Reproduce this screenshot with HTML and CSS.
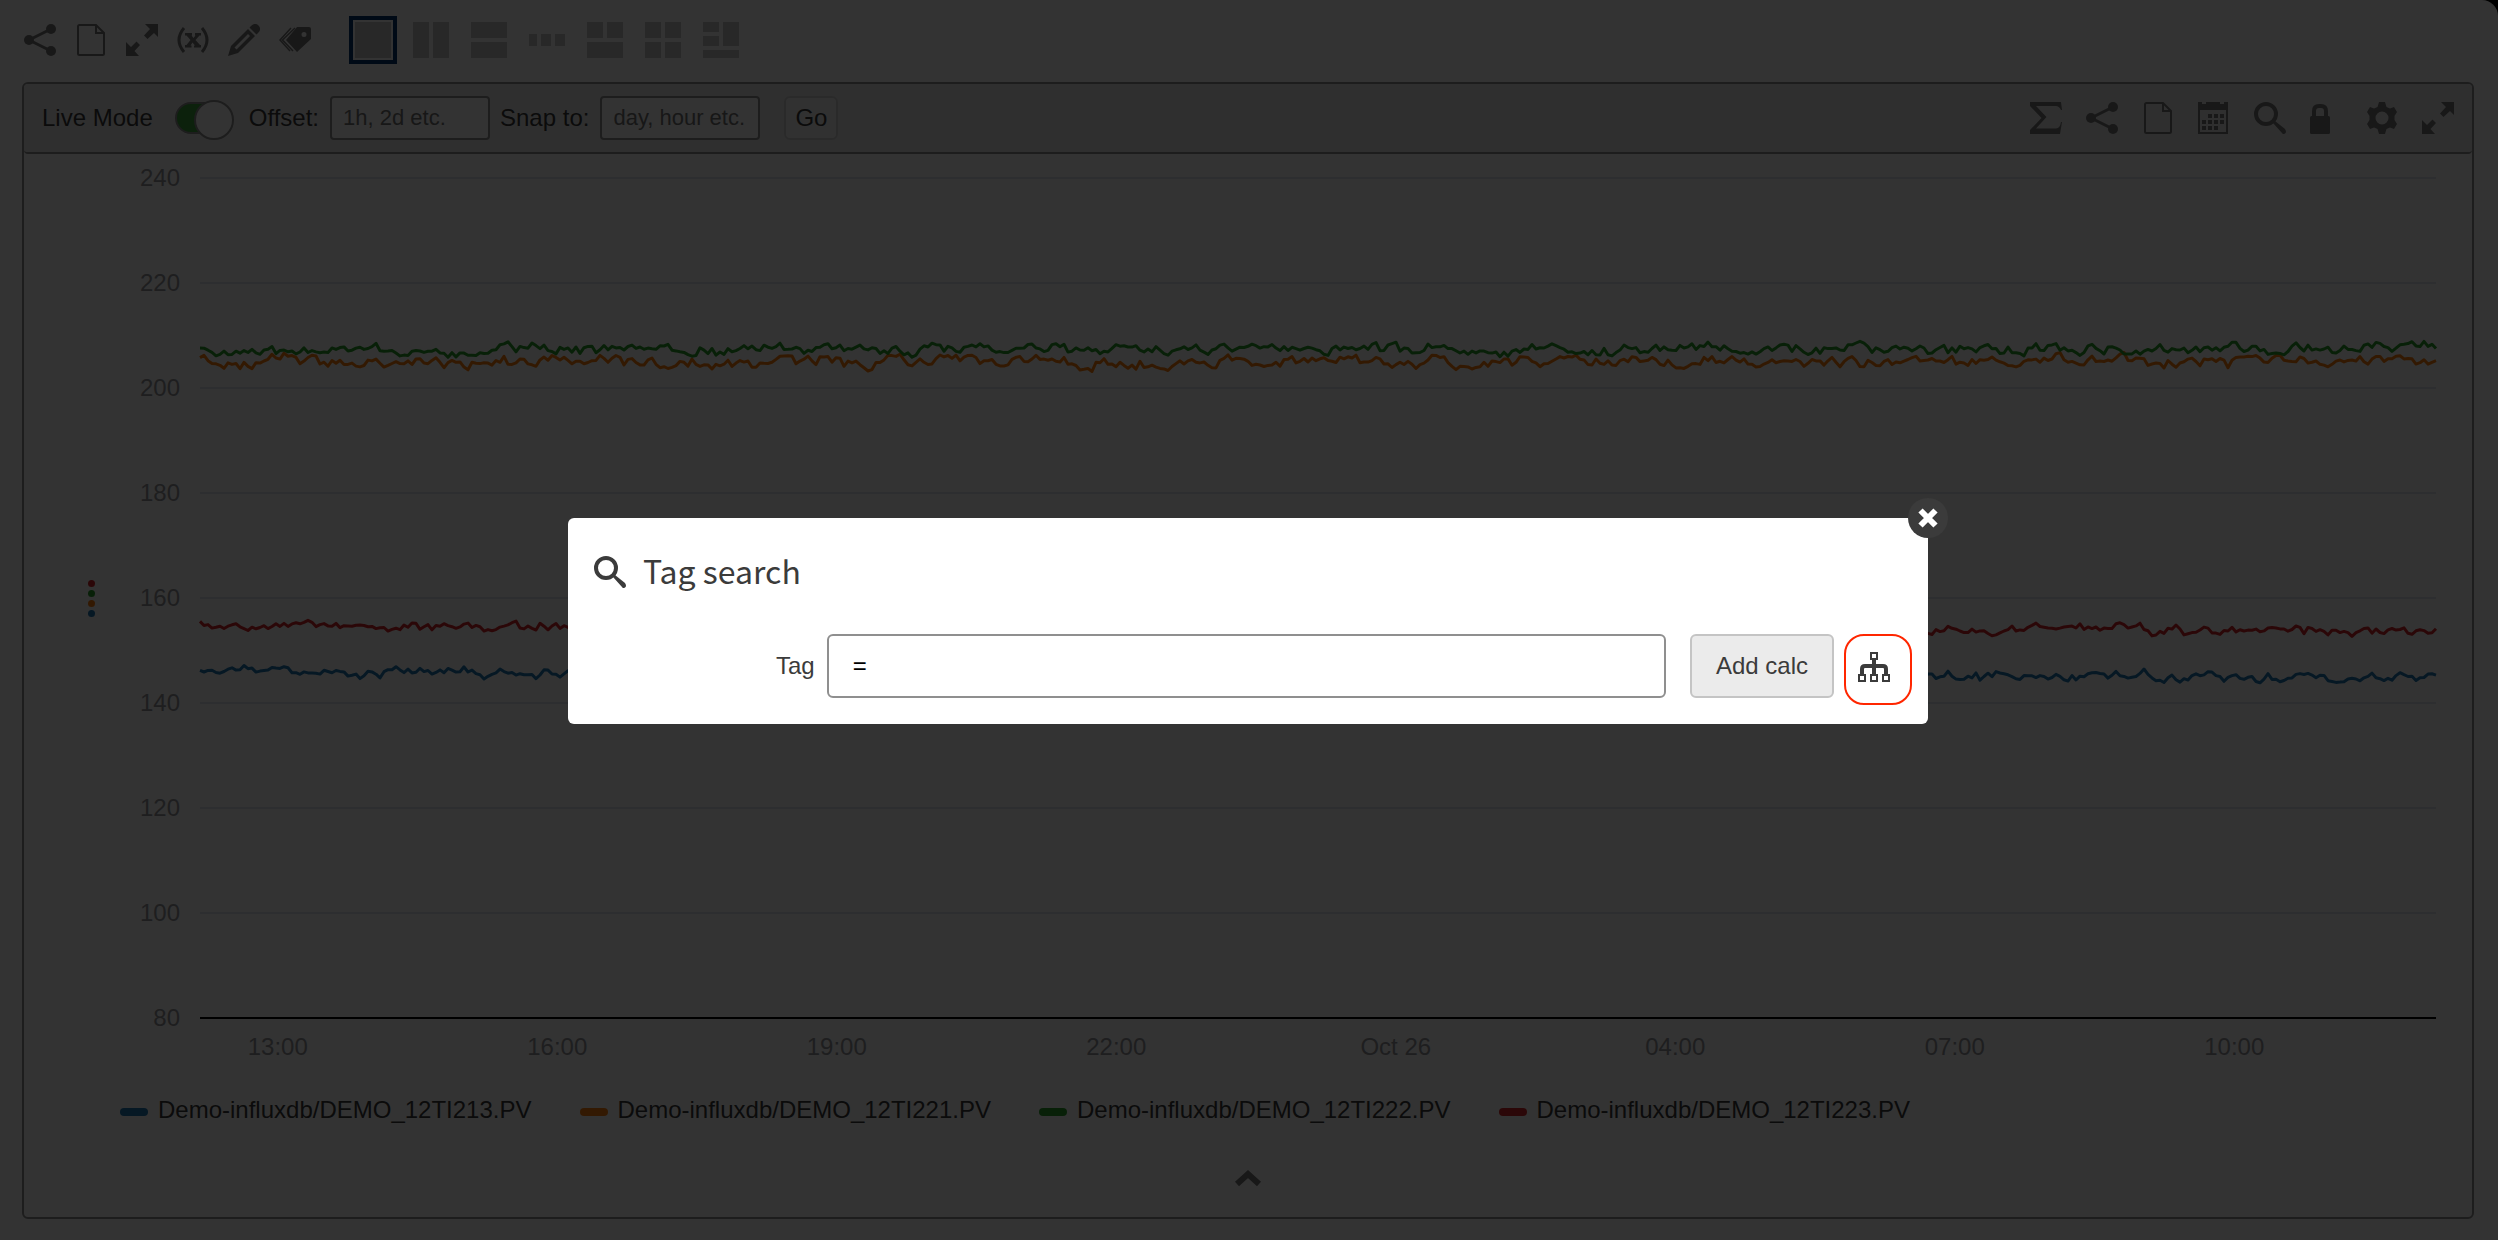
FILE: index.html
```html
<!DOCTYPE html>
<html lang="en">
<head>
<meta charset="utf-8">
<title>Trend view</title>
<link rel="stylesheet" href="styles.css">
</head>
<body>
<svg class="sprite" aria-hidden="true">
  <symbol id="i-share" viewBox="0 0 32 32"><path d="M5 16 27 5M5 16 27 27" fill="none" stroke="currentColor" stroke-width="3"/><circle cx="5" cy="16" r="5"/><circle cx="27" cy="5" r="5"/><circle cx="27" cy="27" r="5"/></symbol>
  <symbol id="i-file" viewBox="0 0 32 32"><path d="M5 1H21L29 9V29.500Q29 31 27.500 31H4.500Q3 31 3 29.500V2.500Q3 1 4.500 1ZM21 1V9H29" fill="none" stroke="currentColor" stroke-width="2"/></symbol>
  <symbol id="i-expand" viewBox="0 0 32 32"><path d="M19 0H32V13L28 9 21.500 15 18 11.500 24 5ZM13 32H0V18L5 23 10.500 17.500 14 21 8.500 27Z"/></symbol>
  <symbol id="i-calc" viewBox="0 0 32 32"><path d="M7 4Q-3 16 7 28M25 4Q35 16 25 28" fill="none" stroke="currentColor" stroke-width="3"/><path d="M8 9H15V11.500H14.500L16.500 14 18.500 11.500H18V9H24V11.500H22.500L18.500 16 23 21H24V23.500H17V21.500H18L15.500 18.500 13.500 21.500H14.500V23.500H8V21H9.500L13.500 16 9.500 11.500H8Z"/></symbol>
  <symbol id="i-pencil" viewBox="0 0 32 32"><path d="M23 2Q27-2 30.500 1.500T30 9L28.500 10.500 21.500 3.500ZM20 5 27 12 10 29 0 32 3 22ZM20 10 6.500 23.500 8.500 25.500 22 12Z" fill-rule="evenodd"/></symbol>
  <symbol id="i-tags" viewBox="0 0 32 32"><path d="M18 3H30Q32 3 32 5V15L18 28 7 16ZM25 8A2.500 2.500 0 1 0 25 13 2.500 2.500 0 1 0 25 8Z" fill-rule="evenodd"/><path d="M16 4 3.500 16 14 27M12 4 1 16 11 27" fill="none" stroke="currentColor" stroke-width="1.500"/></symbol>
  <symbol id="i-sigma" viewBox="0 0 32 32"><path d="M0 0H31L32 8H31Q29 4 26 4H6L16.500 15 6 26.500H26Q30 26.500 31 20H32L30 32H0V28L11.500 16 0 4Z"/></symbol>
  <symbol id="i-calendar" viewBox="0 0 32 32"><path d="M0 0H4V2H8V0H22V2H26V0H30V32H0ZM2 8V30H28V8Z" fill-rule="evenodd"/><path d="M10 12h4v4h-4zM16 12h4v4h-4zM22 12h4v4h-4zM4 18h4v4h-4zM10 18h4v4h-4zM16 18h4v4h-4zM22 18h4v4h-4zM4 24h4v4h-4zM10 24h4v4h-4zM16 24h4v4h-4z"/></symbol>
  <symbol id="i-search" viewBox="0 0 32 32"><circle cx="12" cy="12" r="10" fill="none" stroke="currentColor" stroke-width="4"/><path d="M19 21 21 19 31 27Q33 30 31 31.500T28 31Z"/></symbol>
  <symbol id="i-lock" viewBox="0 0 32 32"><path d="M4 16V9Q4 4 9 4H11Q16 4 16 9V16" fill="none" stroke="currentColor" stroke-width="4"/><rect y="14" width="20" height="18" rx="1.500"/></symbol>
  <symbol id="i-gear" viewBox="0 0 32 32"><path d="M13 0H19L20.500 5 24 6.500 28 5 31 10 28.500 14V18L31 22 28 27 24 25.500 20.500 27 19 32H13L11.500 27 8 25.500 4 27 1 22 3.500 18V14L1 10 4 5 8 6.500 11.500 5ZM16 9.500A6.500 6.500 0 1 0 16 22.500 6.500 6.500 0 1 0 16 9.500Z" fill-rule="evenodd"/></symbol>
  <symbol id="i-tree" viewBox="0 1 32 32"><path d="M13 2H19V8H13ZM1 24H7V30H1ZM13 24H19V30H13ZM25 24H31V30H25Z" fill="none" stroke="currentColor" stroke-width="2"/><path d="M16 8V24M4 24V18Q4 15 7 15H25Q28 15 28 18V24" fill="none" stroke="currentColor" stroke-width="4"/></symbol>
  <symbol id="i-close" viewBox="0 0 20 20"><path d="M2.500 2.500 17.500 17.500M17.500 2.500 2.500 17.500" fill="none" stroke="currentColor" stroke-width="6"/></symbol>
  <symbol id="i-up" viewBox="0 0 28 18"><path d="M3 15 14 5 25 15" fill="none" stroke="currentColor" stroke-width="6"/></symbol>
</svg>

<div class="page">
  <nav class="toolbar">
    <div class="tools">
      <button class="icon-btn" aria-label="Share"><svg><use href="#i-share"/></svg></button>
      <button class="icon-btn" aria-label="New"><svg><use href="#i-file"/></svg></button>
      <button class="icon-btn" aria-label="Full screen"><svg><use href="#i-expand"/></svg></button>
      <button class="icon-btn" aria-label="Variables"><svg><use href="#i-calc"/></svg></button>
      <button class="icon-btn" aria-label="Edit"><svg><use href="#i-pencil"/></svg></button>
      <button class="icon-btn" aria-label="Tags"><svg><use href="#i-tags"/></svg></button>
    </div>
    <div class="layouts">
      <button class="layout-btn selected" aria-label="Single"><svg viewBox="0 0 36 36"><path d="M0 0h36v36H0z"/></svg></button>
      <button class="layout-btn" aria-label="Two columns"><svg viewBox="0 0 36 36"><path d="M0 0h16v36H0zM20 0h16v36H20z"/></svg></button>
      <button class="layout-btn" aria-label="Two rows"><svg viewBox="0 0 36 36"><path d="M0 0h36v16H0zM0 20h36v16H0z"/></svg></button>
      <button class="layout-btn" aria-label="Three columns"><svg viewBox="0 0 36 36"><path d="M0 12h8v12H0zM12 12h10v12H12zM26 12h10v12H26z"/></svg></button>
      <button class="layout-btn" aria-label="Two over one"><svg viewBox="0 0 36 36"><path d="M0 0h16v16H0zM20 0h16v16H20zM0 20h36v16H0z"/></svg></button>
      <button class="layout-btn" aria-label="Grid"><svg viewBox="0 0 36 36"><path d="M0 0h16v16H0zM20 0h16v16H20zM0 20h16v16H0zM20 20h16v16H20z"/></svg></button>
      <button class="layout-btn" aria-label="Mixed"><svg viewBox="0 0 36 36"><path d="M0 0h16v10H0zM0 14h16v10H0zM20 0h16v24H20zM0 28h36v8H0z"/></svg></button>
    </div>
  </nav>

  <main class="panel">
    <header class="panel-head">
      <label for="live">Live Mode</label>
      <input class="switch" type="checkbox" id="live" checked>
      <label for="offset">Offset:</label>
      <input class="field" type="text" id="offset" placeholder="1h, 2d etc.">
      <label class="snap" for="snap">Snap to:</label>
      <input class="field" type="text" id="snap" placeholder="day, hour etc.">
      <button class="go">Go</button>
      <div class="panel-tools">
        <button class="icon-btn" aria-label="Statistics"><svg><use href="#i-sigma"/></svg></button>
        <button class="icon-btn" aria-label="Share trend"><svg><use href="#i-share"/></svg></button>
        <button class="icon-btn" aria-label="New trend"><svg><use href="#i-file"/></svg></button>
        <button class="icon-btn" aria-label="Calendar"><svg><use href="#i-calendar"/></svg></button>
        <button class="icon-btn" aria-label="Search"><svg><use href="#i-search"/></svg></button>
        <button class="icon-btn" aria-label="Lock"><svg><use href="#i-lock"/></svg></button>
        <button class="icon-btn" aria-label="Settings"><svg><use href="#i-gear"/></svg></button>
        <button class="icon-btn" aria-label="Expand"><svg><use href="#i-expand"/></svg></button>
      </div>
    </header>

    <section class="chart">
      <div class="axis-dots"><i class="c-red"></i><i class="c-green"></i><i class="c-orange"></i><i class="c-blue"></i></div>
      <div class="y-axis"><span>240</span><span>220</span><span>200</span><span>180</span><span>160</span><span>140</span><span>120</span><span>100</span><span>80</span></div>
      <svg class="plot" id="plot" viewBox="0 0 2236 840" preserveAspectRatio="none"></svg>
      <div class="x-axis"><span>13:00</span><span>16:00</span><span>19:00</span><span>22:00</span><span>Oct 26</span><span>04:00</span><span>07:00</span><span>10:00</span></div>
    </section>

    <ul class="legend">
      <li><i class="c-blue"></i>Demo-influxdb/DEMO_12TI213.PV</li>
      <li><i class="c-orange"></i>Demo-influxdb/DEMO_12TI221.PV</li>
      <li><i class="c-green"></i>Demo-influxdb/DEMO_12TI222.PV</li>
      <li><i class="c-red"></i>Demo-influxdb/DEMO_12TI223.PV</li>
    </ul>
    <button class="up" aria-label="Show details"><svg><use href="#i-up"/></svg></button>
  </main>
</div>

<div class="overlay">
  <div class="modal" role="dialog" aria-labelledby="modal-title">
    <button class="close" aria-label="Close"><svg><use href="#i-close"/></svg></button>
    <div class="modal-head">
      <svg><use href="#i-search"/></svg>
      <h2 id="modal-title">Tag search</h2>
    </div>
    <div class="tag-row">
      <label for="tag">Tag</label>
      <input type="text" id="tag" value="=">
      <button class="add">Add calc</button>
      <button class="browse" aria-label="Browse tags"><svg><use href="#i-tree"/></svg></button>
    </div>
  </div>
</div>
<script src="chart.js"></script>
</body>
</html>
```
FILE: styles.css
```css
* { box-sizing: border-box; }
html, body { height: 100%; }
body {
  margin: 0;
  background: #000;
  color: #3b3b3b;
  font: 24px/28px "Liberation Sans", Arial, sans-serif;
}
button { padding: 0; border: 0; background: none; color: inherit; font: inherit; }
svg { display: block; fill: currentColor; }
.sprite { position: absolute; width: 0; height: 0; }

.page {
  display: flex;
  flex-direction: column;
  min-height: 100vh;
  padding: 16px 24px 22px 22px;
  border-top-right-radius: 16px;
  background: #fff;
}

.toolbar { display: flex; align-items: center; gap: 38px; padding-left: 2px; }
.tools { display: flex; gap: 19px; }
.icon-btn { color: #787878; }
.icon-btn svg { width: 32px; height: 32px; }
.layouts { display: flex; gap: 10px; }
.layout-btn { padding: 2px; border: 4px solid transparent; color: #c8c8c8; }
.layout-btn svg { width: 36px; height: 36px; }
.layout-btn.selected { border-color: #003470; }

.panel {
  display: flex;
  flex: 1;
  flex-direction: column;
  margin-top: 18px;
  border: 2px solid #8f8f8f;
  border-radius: 6px;
}
.panel-head {
  display: flex;
  align-items: center;
  padding: 12px 18px;
  border-bottom: 2px solid #8f8f8f;
  border-radius: 4px;
  background: #ebebeb;
}
.switch {
  appearance: none;
  width: 54px;
  height: 32px;
  margin: 0 20px 0 22px;
  border: 2px solid #8f8f8f;
  border-radius: 16px;
  background: #3ca63c;
}
.switch::before {
  content: "";
  display: block;
  width: 36px;
  height: 36px;
  margin: -4px 0 0 17px;
  border: 2px solid #8f8f8f;
  border-radius: 50%;
  background: #fff;
}
.field {
  width: 160px;
  height: 44px;
  margin-left: 11px;
  padding: 0 11px;
  border: 2px solid #8f8f8f;
  border-radius: 4px;
  background: #fff;
  color: inherit;
  font: 22px "Liberation Sans", Arial, sans-serif;
}
.field::placeholder { color: #757575; }
.snap { margin-left: 10px; }
.go {
  width: 54px;
  height: 44px;
  margin-left: 24px;
  border: 2px solid #d2d2d2;
  border-radius: 6px;
  background: #f5f5f5;
}
.panel-tools { display: flex; gap: 24px; margin-left: auto; }

.chart {
  display: grid;
  flex: 1;
  grid-template-columns: 114px 62px 1fr;
  grid-template-rows: 1fr auto;
  padding: 24px 36px 0 0;
  color: #96979c;
}
.axis-dots {
  display: flex;
  flex-direction: column;
  align-items: center;
  align-self: center;
  gap: 3px;
  padding-left: 20px;
}
.axis-dots i { width: 7px; height: 7px; border-radius: 50%; }
.y-axis {
  display: flex;
  flex-direction: column;
  justify-content: space-between;
  margin: -14px 20px -14px -20px;
  text-align: right;
}
.plot { width: 100%; height: 100%; overflow: visible; }
.plot path { fill: none; stroke-width: 3; stroke-linejoin: round; vector-effect: non-scaling-stroke; }
.plot .grid { stroke: #e0e6f1; stroke-width: 2; }
.plot .base { stroke: #000; stroke-width: 2; }
.plot .blue { stroke: #1f77b4; }
.plot .orange { stroke: #ff7f0e; }
.plot .green { stroke: #2ca02c; }
.plot .red { stroke: #d62728; }
.x-axis {
  display: grid;
  grid-column: 3;
  grid-template-columns: repeat(8, 1fr);
  margin: 15px 62px 0 -62px;
  text-align: center;
}

.c-blue { background: #1f77b4; }
.c-orange { background: #ff7f0e; }
.c-green { background: #2ca02c; }
.c-red { background: #d62728; }

.legend { display: flex; gap: 48px; margin: 35px 96px 0; padding: 0; list-style: none; }
.legend li { display: flex; align-items: center; gap: 10px; }
.legend i { width: 28px; height: 8px; margin-top: 4px; border-radius: 4px; }
.up { align-self: center; margin: 45px 0 30px; color: #787878; }
.up svg { width: 28px; height: 18px; }

.overlay {
  position: fixed;
  inset: 0;
  display: flex;
  align-items: center;
  justify-content: center;
  padding: 2px 26px 0 24px;
  background: rgba(0, 0, 0, 0.8);
}
.modal {
  position: relative;
  width: 100%;
  max-width: 1360px;
  padding: 34px 16px 19px 26px;
  border-radius: 6px;
  background: #fff;
}
.close {
  position: absolute;
  top: -20px;
  right: -20px;
  display: grid;
  place-items: center;
  width: 40px;
  height: 40px;
  border-radius: 50%;
  background: #3b3b3b;
  color: #fff;
}
.close svg { width: 20px; height: 20px; }
.modal-head { display: flex; gap: 17px; height: 40px; margin-bottom: 42px; }
.modal-head svg { width: 32px; height: 32px; margin-top: 4px; }
.modal h2 {
  margin: 0;
  font: 400 32px/36px "Noto Sans CJK SC", "Noto Sans", sans-serif;
}
.tag-row { display: flex; align-items: flex-start; padding-left: 182px; }
.tag-row label { margin-right: 12px; line-height: 64px; }
.tag-row input {
  flex: 1;
  min-width: 0;
  height: 64px;
  padding: 0 24px;
  border: 2px solid #8f8f8f;
  border-radius: 6px;
  color: #000;
  font: inherit;
}
.add {
  width: 144px;
  height: 64px;
  margin: 0 10px 0 24px;
  border: 2px solid #c4c4c4;
  border-radius: 6px;
  background: #ebebeb;
}
.browse {
  width: 68px;
  height: 71px;
  padding: 0 0 3px 12px;
  border: 2px solid #ff2600;
  border-radius: 20px;
}
.browse svg { width: 32px; height: 32px; }
```
FILE: chart.js
```javascript
// Draws the grid and the four tag series into the plot area.
const plot = document.getElementById("plot");

function addPath(d, name) {
  const path = document.createElementNS("http://www.w3.org/2000/svg", "path");
  path.setAttribute("d", d);
  path.setAttribute("class", name);
  plot.appendChild(path);
}

for (let i = 0; i < 8; i++) addPath(`M0 ${i * 105}H2236`, "grid");
addPath("M0 840H2236", "base");

function noisy(start, end, seed, amplitude) {
  const random = () => {
    seed = (seed * 16807) % 2147483647;
    return seed / 2147483647 - 0.5;
  };
  let drift = 0;
  let d = "";
  for (let x = 0; x <= 2236; x += 4) {
    drift = drift * 0.6 + random() * amplitude;
    const y = start + (end - start) * (x / 2236) + drift + random() * 4;
    d += (x ? "L" : "M") + x + " " + y.toFixed(1);
  }
  return d;
}

addPath(noisy(494, 499, 4211, 7), "blue");
addPath(noisy(184, 184, 977, 9), "orange");
addPath(noisy(173, 170, 3571, 8), "green");
addPath(noisy(448, 452, 6007, 7), "red");
```
